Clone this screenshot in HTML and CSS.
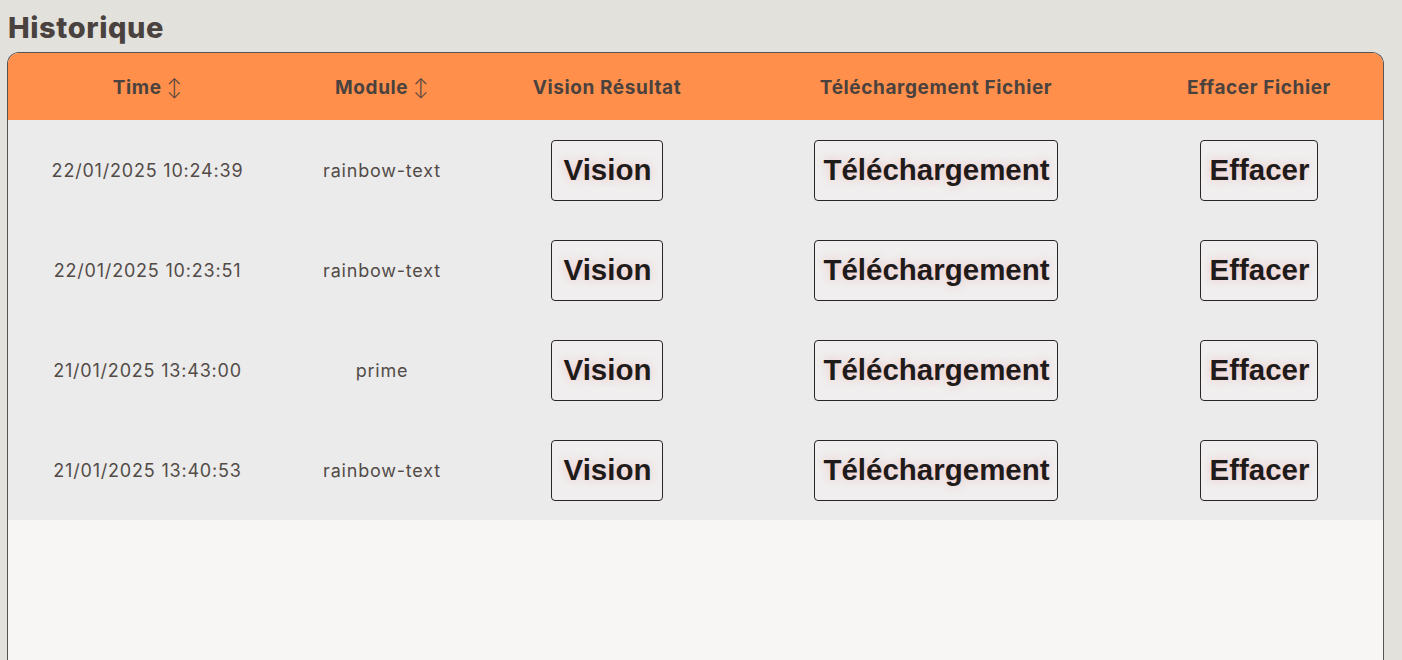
FILE: index.html
```html
<!DOCTYPE html>
<html lang="fr">
<head>
<meta charset="utf-8">
<title>Historique</title>
<link rel="stylesheet" href="styles.css">
</head>
<body>
<h2 class="title">Historique</h2>
<div class="table-wrap">
  <table class="history">
    <colgroup>
      <col class="c-time"><col class="c-module"><col class="c-vision"><col class="c-dl"><col class="c-del">
    </colgroup>
    <thead>
      <tr>
        <th>Time <span class="sort">↕</span></th>
        <th>Module <span class="sort">↕</span></th>
        <th>Vision Résultat</th>
        <th>Téléchargement Fichier</th>
        <th>Effacer Fichier</th>
      </tr>
    </thead>
    <tbody>
      <tr>
        <td>22/01/2025 10:24:39</td><td>rainbow-text</td>
        <td><button class="btn">Vision</button></td>
        <td><button class="btn">Téléchargement</button></td>
        <td><button class="btn">Effacer</button></td>
      </tr>
      <tr>
        <td>22/01/2025 10:23:51</td><td>rainbow-text</td>
        <td><button class="btn">Vision</button></td>
        <td><button class="btn">Téléchargement</button></td>
        <td><button class="btn">Effacer</button></td>
      </tr>
      <tr>
        <td>21/01/2025 13:43:00</td><td>prime</td>
        <td><button class="btn">Vision</button></td>
        <td><button class="btn">Téléchargement</button></td>
        <td><button class="btn">Effacer</button></td>
      </tr>
      <tr>
        <td>21/01/2025 13:40:53</td><td>rainbow-text</td>
        <td><button class="btn">Vision</button></td>
        <td><button class="btn">Téléchargement</button></td>
        <td><button class="btn">Effacer</button></td>
      </tr>
    </tbody>
  </table>
</div>
</body>
</html>
```
FILE: styles.css
```css
html, body {
  margin: 0;
  padding: 0;
  background: #e3e1dc;
  font-family: "Inter", "Open Sans", sans-serif;
  color: #4a423f;
  overflow: hidden;
}
body {
  padding: 11px 18px 0 7px;
}
.title {
  margin: 0 0 7px 1px;
  font-size: 29px;
  font-weight: 800;
  line-height: 34px;
  color: #4a423f;
  letter-spacing: 0.6px;
}
.table-wrap {
  border: 1px solid #555;
  border-bottom: none;
  border-radius: 12px 12px 0 0;
  overflow: hidden;
  background: #f7f6f4;
  height: 607px;
}
.history {
  width: 100%;
  border-collapse: collapse;
  table-layout: fixed;
}
.c-time { width: 279px; }
.c-module { width: 190px; }
.c-vision { width: 260px; }
.c-dl { width: 398px; }
.c-del { width: auto; }
.history thead tr {
  background: #ff8f4a;
  height: 67px;
}
.history th {
  font-size: 19px;
  font-weight: 700;
  color: #4a423f;
  text-align: center;
  padding: 1px 0 0;
  letter-spacing: 0.6px;
}
.sort {
  font-weight: 300;
  font-size: 18px;
}
.history tbody tr {
  background: #ebebeb;
  height: 100px;
}
.history td {
  text-align: center;
  font-size: 18px;
  color: #534b48;
  padding: 0;
  letter-spacing: 0.8px;
}
.btn {
  font-family: "Liberation Sans", Arial, sans-serif;
  font-weight: 700;
  font-size: 29.5px;
  line-height: 35px;
  letter-spacing: 0;
  color: #1f1b1b;
  background: #f0eeee;
  border: 1px solid #2b2626;
  border-radius: 4px;
  padding: 11px 7px 13px 8px;
  min-width: 112px;
  text-shadow: 0 0 8px rgba(240, 150, 150, 0.45);
  cursor: pointer;
}
```
